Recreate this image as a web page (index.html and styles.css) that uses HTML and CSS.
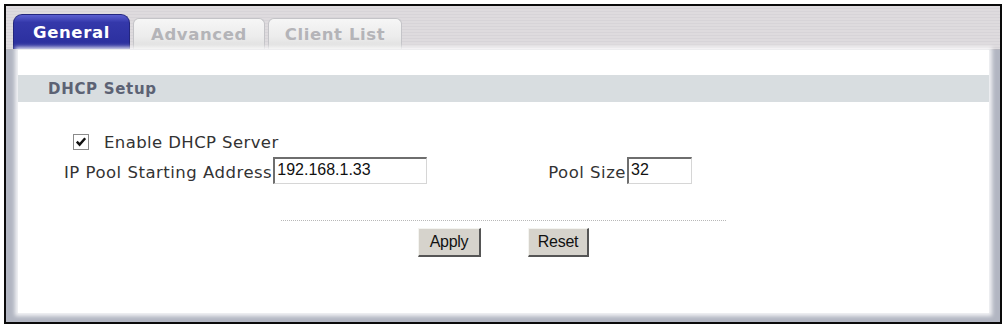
FILE: index.html
```html
<!DOCTYPE html>
<html>
<head>
<meta charset="utf-8">
<link rel="stylesheet" href="styles.css">
</head>
<body>
<div class="frame">
  <div class="tabbar">
    <div class="tab active">General</div>
    <div class="tab">Advanced</div>
    <div class="tab">Client List</div>
  </div>
  <div class="panel">
    <div class="content">
      <div class="section">DHCP Setup</div>
      <div class="check-row">
        <span class="checkbox"><svg width="12" height="12" viewBox="0 0 12 12"><path d="M1.8 5.6 L4.6 8.6 L10.2 2.2" fill="none" stroke="#111" stroke-width="2.4"/></svg></span>
        <span class="check-label">Enable DHCP Server</span>
      </div>
      <div class="field-row">
        <div class="field">
          <span class="label">IP Pool Starting Address</span>
          <span class="input wide">192.168.1.33</span>
        </div>
        <div class="field">
          <span class="label">Pool Size</span>
          <span class="input narrow">32</span>
        </div>
      </div>
      <div class="divider"></div>
      <div class="buttons">
        <span class="btn apply">Apply</span>
        <span class="btn reset">Reset</span>
      </div>
    </div>
  </div>
</div>
</body>
</html>
```

FILE: styles.css
```css
html, body {
  margin: 0;
  padding: 0;
  background: #ffffff;
}

.frame {
  margin: 4px 0 0 4px;
  width: 998px;
  height: 320px;
  box-sizing: border-box;
  border: 2px solid #0a0a0a;
  display: flex;
  flex-direction: column;
  background: #dcd9dc;
}

.tabbar {
  height: 43px;
  display: flex;
  align-items: flex-end;
  padding-left: 7px;
  gap: 3px;
  background: repeating-linear-gradient(to bottom, #dedbde 0, #dedbde 2px, #d7d4d8 2px, #d7d4d8 3px);
}

.tab {
  font-family: "DejaVu Sans", Verdana, sans-serif;
  font-weight: bold;
  font-size: 16.5px;
  letter-spacing: 0.6px;
  display: flex;
  align-items: center;
  justify-content: center;
  box-sizing: border-box;
  height: 31px;
  width: 132px;
  color: #b4b4b8;
  background: linear-gradient(to bottom, #f6f6f6 0%, #ececec 60%, #dcdcdc 100%);
  border: 1px solid #c4c4c8;
  border-bottom: none;
  border-radius: 6px 6px 0 0;
  padding-top: 1px;
}

.tab + .tab + .tab {
  width: 134px;
}

.tab.active {
  width: 117px;
  height: 35px;
  color: #ffffff;
  background: linear-gradient(to bottom, #5a5fd0 0%, #3438aa 22%, #2a2e9c 100%);
  border: 1px solid #23267e;
  border-bottom: none;
  border-radius: 9px 9px 0 0;
  padding-top: 0;
}

.panel {
  flex: 1;
  display: flex;
  border-top: 1px solid #b6b6be;
  background: #b2b6c2;
  padding: 0 11px 9px 12px;
}

.content {
  flex: 1;
  background: #ffffff;
  box-shadow: 0 0 4px 3px rgba(255, 255, 255, 0.85);
  padding-top: 25px;
  display: flex;
  flex-direction: column;
}

.section {
  height: 27px;
  background: #d8dde0;
  display: flex;
  align-items: center;
  padding-left: 30px;
  font-family: "DejaVu Sans", Verdana, sans-serif;
  font-weight: bold;
  font-size: 15px;
  letter-spacing: 0.7px;
  color: #5c6274;
}

.check-row {
  margin-top: 32px;
  display: flex;
  align-items: center;
  padding-left: 55px;
  height: 16px;
}

.checkbox {
  width: 14px;
  height: 14px;
  border: 1px solid #8a8a8a;
  background: #ffffff;
  display: flex;
  align-items: center;
  justify-content: center;
}

.check-label {
  margin-left: 15px;
  font-family: "DejaVu Sans", Verdana, sans-serif;
  font-size: 16.5px;
  letter-spacing: 0.4px;
  color: #333333;
}

.field-row {
  margin-top: 7px;
  display: flex;
  padding-left: 46px;
  gap: 121px;
}

.field {
  display: flex;
  align-items: center;
}

.label {
  font-family: "DejaVu Sans", Verdana, sans-serif;
  font-size: 16.5px;
  letter-spacing: 0.5px;
  color: #333333;
  padding-top: 4px;
}

.input {
  box-sizing: border-box;
  height: 27px;
  border-top: 2px solid #6e6e6e;
  border-left: 2px solid #6e6e6e;
  border-right: 1px solid #d6d6d6;
  border-bottom: 1px solid #d6d6d6;
  font-family: "Liberation Sans", Arial, sans-serif;
  font-size: 16px;
  color: #111111;
  padding: 1px 0 0 2px;
  line-height: 20px;
  margin-left: 1px;
}

.input.wide {
  width: 154px;
}

.input.narrow {
  width: 65px;
}

.divider {
  margin: 36px auto 0;
  width: 445px;
  border-top: 1px dotted #b8b8b8;
}

.buttons {
  margin-top: 7px;
  display: flex;
  justify-content: center;
  gap: 47px;
}

.btn {
  box-sizing: border-box;
  height: 29px;
  display: flex;
  align-items: center;
  justify-content: center;
  background: #d6d3cc;
  border-top: 1px solid #f4f4f0;
  border-left: 1px solid #f4f4f0;
  border-right: 2px solid #555555;
  border-bottom: 2px solid #555555;
  font-family: "Liberation Sans", Arial, sans-serif;
  font-size: 16px;
  color: #111111;
  letter-spacing: -0.3px;
}

.btn.apply {
  width: 63px;
}

.btn.reset {
  width: 61px;
}
```
